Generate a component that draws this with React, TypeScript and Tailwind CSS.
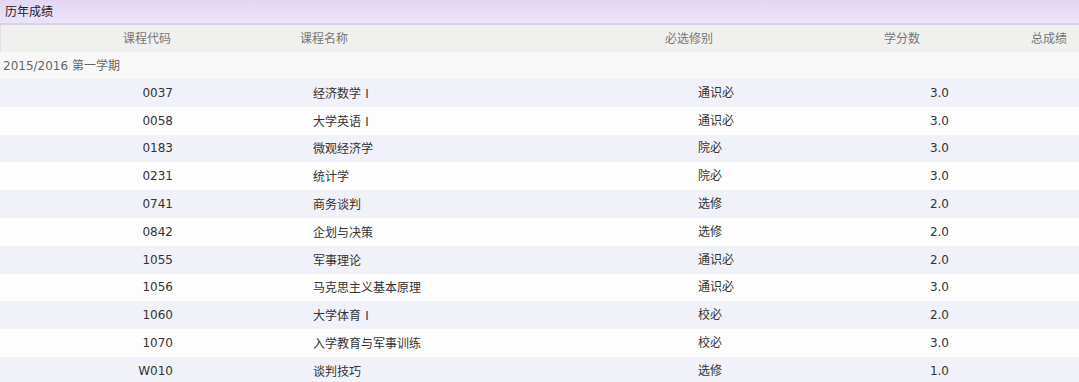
const rows = [
  { code: "0037", name: "经济数学Ⅰ", type: "通识必", credit: "3.0" },
  { code: "0058", name: "大学英语Ⅰ", type: "通识必", credit: "3.0" },
  { code: "0183", name: "微观经济学", type: "院必", credit: "3.0" },
  { code: "0231", name: "统计学", type: "院必", credit: "3.0" },
  { code: "0741", name: "商务谈判", type: "选修", credit: "2.0" },
  { code: "0842", name: "企划与决策", type: "选修", credit: "2.0" },
  { code: "1055", name: "军事理论", type: "通识必", credit: "2.0" },
  { code: "1056", name: "马克思主义基本原理", type: "通识必", credit: "3.0" },
  { code: "1060", name: "大学体育Ⅰ", type: "校必", credit: "2.0" },
  { code: "1070", name: "入学教育与军事训练", type: "校必", credit: "3.0" },
  { code: "W010", name: "谈判技巧", type: "选修", credit: "1.0" },
];

export default function App() {
  return (
    <div
      className="h-[382px] w-[1079px] overflow-hidden bg-white text-[12px] text-[#333]"
      style={{ fontFamily: '"DejaVu Sans", "Noto Sans CJK SC", sans-serif' }}
    >
      <div className="flex h-[23px] items-center bg-gradient-to-b from-[#e2d6f5] to-[#ece4fa] pl-[5px] text-[#222]">
        历年成绩
      </div>
      <div className="h-[2px] bg-[#d9d3e4]" />

      {/* 表头 */}
      <div className="flex h-[27px] items-center border-l border-[#e2e2e2] bg-[#f0f0ee] text-[#777]">
        <div className="w-[170px] text-right">课程代码</div>
        <div className="ml-[129px] w-[365px]">课程名称</div>
        <div className="w-[219px]">必选修别</div>
        <div className="w-[147px]">学分数</div>
        <div>总成绩</div>
      </div>

      <div className="flex h-[27px] items-center bg-[#f8f8f8] pl-[3px] text-[#666]">
        2015/2016 第一学期
      </div>

      {rows.map((r, i) => (
        <div
          key={r.code}
          className={
            "flex h-[27.8px] items-center " +
            (i % 2 === 0 ? "bg-[#f1f1f9]" : "bg-[#fdfdfd]")
          }
        >
          <div className="w-[173px] text-right">{r.code}</div>
          <div className="ml-[140px] w-[385px] font-['Noto_Sans_CJK_SC',sans-serif]">{r.name}</div>
          <div className="w-[200px]">{r.type}</div>
          <div className="w-[51px] text-right">{r.credit}</div>
        </div>
      ))}
    </div>
  );
}
